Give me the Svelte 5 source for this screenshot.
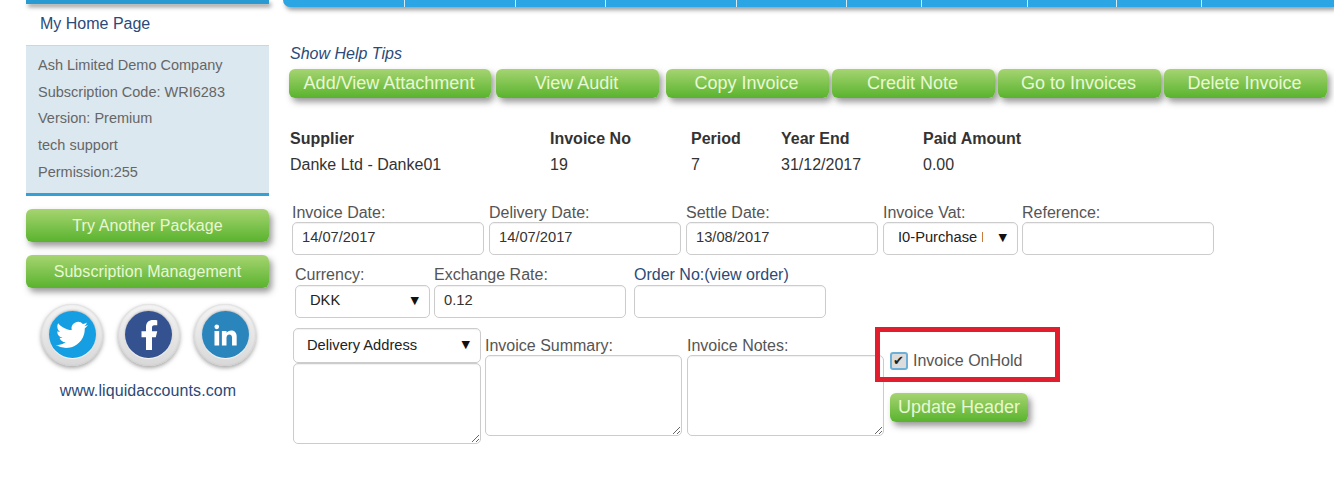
<script lang="ts">
	const navStops = [122, 111, 90, 131, 110, 75, 106, 89, 85, 133]
	const infoLines = [
		'Ash Limited Demo Company',
		'Subscription Code: WRI6283',
		'Version: Premium',
		'tech support',
		'Permission:255'
	]
	const actions = [
		{ label: 'Add/View Attachment', width: 202 },
		{ label: 'View Audit', width: 163 },
		{ label: 'Copy Invoice', width: 163 },
		{ label: 'Credit Note', width: 163 },
		{ label: 'Go to Invoices', width: 163 },
		{ label: 'Delete Invoice', width: 163 }
	]
	const summary = [
		{ head: 'Supplier', value: 'Danke Ltd - Danke01', width: 260 },
		{ head: 'Invoice No', value: '19', width: 141 },
		{ head: 'Period', value: '7', width: 90 },
		{ head: 'Year End', value: '31/12/2017', width: 142 },
		{ head: 'Paid Amount', value: '0.00', width: 120 }
	]
	const dates = [
		{ label: 'Invoice Date:', value: '14/07/2017' },
		{ label: 'Delivery Date:', value: '14/07/2017' },
		{ label: 'Settle Date:', value: '13/08/2017' }
	]
</script>

<div class="page">
	<aside class="sidebar">
		<div class="sidebar__cap"></div>
		<div class="sidebar__home">My Home Page</div>
		<div class="info">
			{#each infoLines as line}
				<p>{line}</p>
			{/each}
		</div>
		<button class="btn btn--side">Try Another Package</button>
		<button class="btn btn--side">Subscription Management</button>
		<div class="social">
			<div class="social__ring">
				<div class="social__disc twitter">
					<svg viewBox="0 0 24 24" width="32" height="32"><path fill="#fff" d="M23.953 4.57a10 10 0 01-2.825.775 4.958 4.958 0 002.163-2.723c-.951.555-2.005.959-3.127 1.184a4.92 4.92 0 00-8.384 4.482C7.69 8.095 4.067 6.13 1.64 3.162a4.822 4.822 0 00-.666 2.475c0 1.71.87 3.213 2.188 4.096a4.904 4.904 0 01-2.228-.616v.06a4.923 4.923 0 003.946 4.827 4.996 4.996 0 01-2.212.085 4.936 4.936 0 004.604 3.417 9.867 9.867 0 01-6.102 2.105c-.39 0-.779-.023-1.17-.067a13.995 13.995 0 007.557 2.209c9.053 0 13.998-7.496 13.998-13.985 0-.21 0-.42-.015-.63A9.935 9.935 0 0024 4.59z" /></svg>
				</div>
			</div>
			<div class="social__ring">
				<div class="social__disc facebook">
					<svg viewBox="0 0 24 24" width="36" height="36"><path fill="#fff" d="M14 13.5h2.5l1-4H14v-2c0-1.03 0-2 2-2h1.5V2.14c-.326-.043-1.557-.14-2.857-.14C11.928 2 10 3.657 10 6.7v2.8H7v4h3V22h4v-8.5z" /></svg>
				</div>
			</div>
			<div class="social__ring">
				<div class="social__disc linkedin">
					<svg viewBox="0 0 24 24" width="28" height="28"><path fill="#fff" d="M6.94 5a2 2 0 1 1-4-.002 2 2 0 0 1 4 .002zM7 8.48H3V21h4V8.48zm6.32 0H9.34V21h3.94v-6.57c0-3.66 4.77-4 4.77 0V21H22v-7.93c0-6.17-7.06-5.94-8.72-2.91l.04-1.68z" /></svg>
				</div>
			</div>
		</div>
		<div class="site">www.liquidaccounts.com</div>
	</aside>

	<main class="main">
		<nav class="nav">
			{#each navStops as w}
				<span class="nav__item" style="width: {w}px"></span>
			{/each}
		</nav>

		<div class="content">
			<div class="tips">Show Help Tips</div>
			<div class="actions">
				{#each actions as a}
					<button class="btn btn--action" style="width: {a.width}px">{a.label}</button>
				{/each}
			</div>

			<div class="summary">
				{#each summary as s}
					<div style="width: {s.width}px">
						<strong>{s.head}</strong>
						<span>{s.value}</span>
					</div>
				{/each}
			</div>

			<div class="row row--one">
				{#each dates as d}
					<label class="field">
						{d.label}
						<input class="input" value={d.value} />
					</label>
				{/each}
				<label class="field">
					Invoice Vat:
					<span class="select select--vat"><span class="select__text">I0-Purchase EU</span></span>
				</label>
				<label class="field field--ref">
					Reference:
					<input class="input" />
				</label>
			</div>

			<div class="row row--two">
				<label class="field">
					Currency:
					<span class="select select--cur">DKK</span>
				</label>
				<label class="field">
					Exchange Rate:
					<input class="input" value="0.12" />
				</label>
				<label class="field field--order">
					<span class="link">Order No:(view order)</span>
					<input class="input" />
				</label>
			</div>

			<div class="row row--three">
				<div class="address">
					<span class="select select--addr">Delivery Address</span>
					<textarea class="area area--addr"></textarea>
				</div>
				<label class="field field--note">
					Invoice Summary:
					<textarea class="area"></textarea>
				</label>
				<label class="field field--note">
					Invoice Notes:
					<textarea class="area"></textarea>
				</label>
				<div class="hold">
					<div class="hold__check">
						<label class="check">
							<input type="checkbox" checked />
							Invoice OnHold
						</label>
						<div class="hold__mark"></div>
					</div>
					<button class="btn btn--update">Update Header</button>
				</div>
			</div>
		</div>
	</main>
</div>

<style>
	:global(body) {
		background: #fff;
		overflow: hidden;
	}
	.page {
		display: flex;
		width: 1334px;
		height: 494px;
		overflow: hidden;
		font-family: 'Liberation Sans', Arial, sans-serif;
		font-size: 16px;
		color: #333;
	}
	.sidebar {
		width: 243px;
		margin-left: 26px;
		flex-shrink: 0;
	}
	.sidebar__cap {
		height: 4px;
		background: #2a9bd2;
		box-shadow: 2px 3px 4px rgba(60, 60, 60, 0.55);
	}
	.sidebar__home {
		height: 42px;
		line-height: 39px;
		padding-left: 14px;
		color: #2b4a78;
		border-bottom: 1px solid #cfd6da;
		box-sizing: border-box;
	}
	.info {
		background: #dbe8f0;
		border-bottom: 3px solid #35a0d3;
		padding: 6px 12px 7px;
		font-size: 14.5px;
		color: #666;
	}
	.info p {
		margin: 0;
		line-height: 26.7px;
	}

	.btn {
		display: block;
		border: none;
		padding: 0;
		border-radius: 6px;
		font-family: inherit;
		color: #e8f8d4;
		background: linear-gradient(to bottom, #a6d471, #59b32e);
		box-shadow: 3px 4px 6px rgba(70, 70, 70, 0.55);
	}
	.btn--side {
		width: 243px;
		height: 33px;
		font-size: 16px;
		letter-spacing: 0.08px;
		margin-top: 13px;
		padding-top: 1px;
	}
	.btn--action {
		height: 29px;
		font-size: 18px;
		padding-right: 2px;
	}
	.btn--update {
		width: 138px;
		height: 29px;
		font-size: 18px;
		margin: 11px 0 0 15px;
	}

	.social {
		display: flex;
		gap: 14.5px;
		margin: 16px 0 0 15px;
	}
	.social__ring {
		width: 62px;
		height: 62px;
		border-radius: 50%;
		display: flex;
		align-items: center;
		justify-content: center;
		background: linear-gradient(to bottom, #f4f4f4, #d8d8d8);
		box-shadow: 0 2px 4px rgba(90, 90, 90, 0.55), inset 0 0 2px #bbb;
	}
	.social__disc {
		width: 47px;
		height: 47px;
		border-radius: 50%;
		display: flex;
		align-items: center;
		justify-content: center;
		box-shadow: 0 1px 1px rgba(255, 255, 255, 0.8), 0 -1px 2px rgba(90, 90, 90, 0.35);
	}
	.twitter {
		background: #159ee2;
	}
	.facebook {
		background: #34528f;
	}
	.linkedin {
		background: #2a85bd;
	}
	.site {
		margin-top: 14px;
		text-align: center;
		color: #2b4a78;
		line-height: 22px;
		padding-left: 1px;
		letter-spacing: 0.1px;
	}

	.main {
		flex: 1;
		margin-left: 14px;
		min-width: 0;
	}
	.nav {
		display: flex;
		height: 7px;
		background: #2ba5e3;
		border-bottom-left-radius: 8px;
		box-shadow: 2px 3px 4px rgba(60, 60, 60, 0.5);
	}
	.nav__item {
		box-sizing: border-box;
		height: 7px;
		border-right: 1px solid #d5ecf8;
	}
	.nav__item:last-child {
		border-right: none;
		flex: 1;
	}
	.content {
		padding-left: 7px;
	}
	.tips {
		margin-top: 38px;
		line-height: 18px;
		font-style: italic;
		color: #2b4a78;
	}
	.actions {
		display: flex;
		margin: 6px 0 0 -1px;
		gap: 5px;
	}
	.actions .btn:nth-child(2) {
		margin-right: 2px;
	}
	.actions .btn:nth-child(3),
	.actions .btn:nth-child(4),
	.actions .btn:nth-child(5) {
		margin-right: -2px;
	}
	.summary {
		display: flex;
		margin-top: 31px;
		line-height: 20px;
	}
	.summary strong,
	.summary span {
		display: block;
		white-space: nowrap;
	}
	.summary span {
		margin-top: 6px;
	}

	.row {
		display: flex;
		align-items: flex-start;
	}
	.row--one {
		margin: 29px 0 0 2px;
		gap: 5px;
	}
	.row--two {
		margin: 11px 0 0 5px;
		gap: 4px;
	}
	.row--three {
		margin: 10px 0 0 3px;
		gap: 4px;
	}
	.field {
		display: flex;
		flex-direction: column;
		line-height: 18px;
		color: #555;
		white-space: nowrap;
	}
	.field--ref {
		margin-left: -1px;
		width: 192px;
	}
	.field--order {
		margin-left: 4px;
	}
	.field--note {
		margin-top: 9px;
		margin-right: 1px;
	}
	.link {
		color: #2b4a78;
	}
	.input,
	.select,
	.area {
		box-sizing: border-box;
		border: 1px solid #ccc;
		border-radius: 5px;
		background: #fff;
		font-family: inherit;
		font-size: 14.7px;
		color: #333;
		box-shadow: inset 0 1px 1px rgba(0, 0, 0, 0.06);
		outline: none;
	}
	.input {
		width: 192px;
		height: 33px;
		padding: 0 9px 3px;
	}
	.row--two .input,
	.row--two .select {
		margin-top: 1px;
	}
	.select {
		position: relative;
		display: block;
		height: 33px;
		line-height: 29px;
		padding-left: 14px;
		color: #222;
	}
	.select::after {
		content: '▼';
		position: absolute;
		right: 10px;
		top: 0;
		font-family: 'DejaVu Sans', sans-serif;
		font-size: 11px;
		color: #111;
	}
	.select--vat {
		width: 135px;
	}
	.select__text {
		display: block;
		width: 85px;
		overflow: hidden;
		white-space: nowrap;
	}
	.select--cur {
		width: 135px;
	}
	.select--addr {
		width: 188px;
		height: 35px;
		line-height: 32px;
		padding-left: 13px;
	}
	.address {
		display: flex;
		flex-direction: column;
	}
	.area {
		display: block;
		width: 197px;
		height: 81px;
		margin: 0;
		padding: 4px;
	}
	.area--addr {
		width: 188px;
	}
	.hold {
		margin-left: -14px;
	}
	.hold__check {
		position: relative;
		height: 54px;
	}
	.check {
		display: flex;
		align-items: center;
		gap: 5px;
		padding: 24px 0 0 15px;
		line-height: 18px;
		color: #555;
		white-space: nowrap;
	}
	.check input {
		appearance: none;
		box-sizing: border-box;
		position: relative;
		flex-shrink: 0;
		width: 18px;
		height: 18px;
		margin: 0;
		border: 2px solid #6cb0d8;
		border-radius: 3px;
		background: #dcdcdc;
	}
	.check input::after {
		content: '✔';
		position: absolute;
		left: 1px;
		top: -1px;
		font-family: 'DejaVu Sans', sans-serif;
		font-size: 13px;
		line-height: 16px;
		color: #222;
	}
	.hold__mark {
		position: absolute;
		left: 0;
		top: -1px;
		width: 185px;
		height: 55px;
		box-sizing: border-box;
		border: 5px solid #e11d2e;
		pointer-events: none;
	}
</style>
